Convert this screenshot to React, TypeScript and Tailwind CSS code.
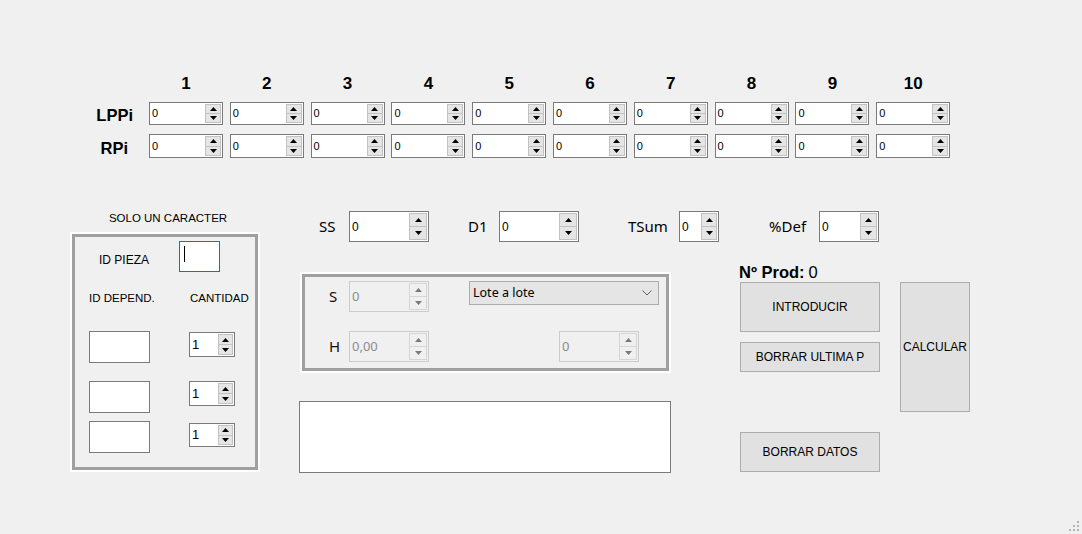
import React from "react";

function Arrow({ up, color }: { up: boolean; color: string }) {
  return (
    <svg width="7" height="4" viewBox="0 0 7 4" className="block">
      <polygon points={up ? "0,4 3.5,0 7,4" : "0,0 7,0 3.5,4"} fill={color} />
    </svg>
  );
}

function Spin({
  box,
  btn,
  value,
  disabled = false,
  text = "text-[11px]",
}: {
  box: string;
  btn: string;
  value: string;
  disabled?: boolean;
  text?: string;
}) {
  const half = disabled
    ? "flex-1 flex items-center justify-center bg-[#f0f0f0] border border-[#d6d6d6]"
    : "flex-1 flex items-center justify-center bg-[#e5e5e5] border border-[#c2c2c2]";
  return (
    <div
      className={`${box} flex border ${
        disabled ? "bg-[#f0f0f0] border-[#cccccc]" : "bg-white border-[#7a7a7a]"
      }`}
    >
      <div
        className={`flex-1 flex items-center pl-[2px] ${text} ${
          disabled ? "text-[#8c8c8c]" : "text-black"
        }`}
      >
        {value}
      </div>
      <div className={`${btn} flex flex-col my-[1px] mr-[1px]`}>
        <div className={half}>
          <Arrow up color={disabled ? "#7a7a7a" : "#000"} />
        </div>
        <div className={`${half} -mt-px`}>
          <Arrow up={false} color={disabled ? "#7a7a7a" : "#000"} />
        </div>
      </div>
    </div>
  );
}

function Btn({ cls, label }: { cls: string; label: string }) {
  return (
    <div
      className={`${cls} bg-[#e1e1e1] border border-[#adadad] flex items-center justify-center text-[12px] text-black`}
    >
      {label}
    </div>
  );
}

function GroupBox({ cls, children }: { cls: string; children: React.ReactNode }) {
  return (
    <div className={`${cls} border-2 border-white`}>
      <div className="w-full h-full border-[3px] border-[#a0a0a0]">{children}</div>
    </div>
  );
}

const cols = ["1", "2", "3", "4", "5", "6", "7", "8", "9", "10"];

export default function App() {
  return (
    <div className="relative w-[1082px] h-[534px] bg-[#f0f0f0] font-['Liberation_Sans',Arial,sans-serif] text-black overflow-hidden">
      {/* Top grid */}
      <div className="pt-[72px] flex flex-col">
        <div className="flex h-[22px] items-center">
          <div className="w-[149px] shrink-0" />
          <div className="grid grid-cols-[repeat(10,74px)] gap-x-[6.8px]">
            {cols.map((c) => (
              <div key={c} className="text-center text-[17px] font-bold leading-none">
                {c}
              </div>
            ))}
          </div>
        </div>
        <div className="flex mt-[8px] h-[23px]">
          <div className="w-[133px] shrink-0 text-right text-[16.5px] font-bold flex items-center justify-end pt-[4px]">
            LPPi
          </div>
          <div className="ml-[16px] grid grid-cols-[repeat(10,74px)] gap-x-[6.8px]">
            {cols.map((c) => (
              <Spin key={c} box="w-[74px] h-[23px]" btn="w-[16px]" value="0" />
            ))}
          </div>
        </div>
        <div className="flex mt-[9px] h-[24px]">
          <div className="w-[133px] shrink-0 text-right text-[16.5px] font-bold flex items-center justify-end pr-[5px] pt-[5px]">
            RPi
          </div>
          <div className="ml-[16px] grid grid-cols-[repeat(10,74px)] gap-x-[6.8px]">
            {cols.map((c) => (
              <Spin key={c} box="w-[74px] h-[24px]" btn="w-[16px]" value="0" />
            ))}
          </div>
        </div>
      </div>

      {/* Lower section */}
      <div className="mt-[53px] flex items-start">
        {/* Left column */}
        <div className="ml-[70px] w-[190px] flex flex-col">
          <div className="h-[16px] flex items-center justify-center pl-[6px] text-[11.5px]">
            SOLO UN CARACTER
          </div>
          <GroupBox cls="mt-[5px] w-[190px] h-[240px]">
            <div className="flex flex-col">
              <div className="mt-[4px] flex items-center">
                <div className="ml-[24px] w-[80px] text-[12px] pt-[6px]">ID PIEZA</div>
                <div className="w-[41px] h-[31px] bg-white border border-[#0078d7] flex items-start">
                  <div className="ml-[4px] mt-[4px] w-[1px] h-[16px] bg-black" />
                </div>
              </div>
              <div className="mt-[20px] h-[14px] flex items-center text-[11.5px]">
                <div className="ml-[14px] w-[101px]">ID DEPEND.</div>
                <div>CANTIDAD</div>
              </div>
              <div className="mt-[25px] flex items-start">
                <div className="ml-[14px] w-[61px] h-[32px] bg-white border border-[#7a7a7a]" />
                <div className="ml-[39px] mt-[1px]">
                  <Spin box="w-[46px] h-[25px]" btn="w-[15px]" value="1" text="text-[13px]" />
                </div>
              </div>
              <div className="mt-[18px] flex items-start">
                <div className="ml-[14px] w-[61px] h-[32px] bg-white border border-[#7a7a7a]" />
                <div className="ml-[39px]">
                  <Spin box="w-[46px] h-[25px]" btn="w-[15px]" value="1" text="text-[13px]" />
                </div>
              </div>
              <div className="mt-[8px] flex items-start">
                <div className="ml-[14px] w-[61px] h-[32px] bg-white border border-[#7a7a7a]" />
                <div className="ml-[39px] mt-[2px]">
                  <Spin box="w-[46px] h-[24px]" btn="w-[15px]" value="1" text="text-[13px]" />
                </div>
              </div>
            </div>
          </GroupBox>
        </div>

        {/* Right region */}
        <div className="ml-[39px] flex flex-col">
          <div className="h-[31px] flex items-center font-['Noto_Sans',sans-serif] text-[15px]">
            <div className="ml-[20px] w-[30px]">SS</div>
            <Spin box="w-[80px] h-[31px]" btn="w-[18px]" value="0" text="text-[12px] font-['Liberation_Sans',Arial,sans-serif]" />
            <div className="ml-[39px] w-[31px]">D1</div>
            <Spin box="w-[80px] h-[31px]" btn="w-[18px]" value="0" text="text-[12px] font-['Liberation_Sans',Arial,sans-serif]" />
            <div className="ml-[49px] w-[51px]">TSum</div>
            <Spin box="w-[40px] h-[31px]" btn="w-[16px]" value="0" text="text-[12px] font-['Liberation_Sans',Arial,sans-serif]" />
            <div className="ml-[50px] w-[50px]">%Def</div>
            <Spin box="w-[60px] h-[31px]" btn="w-[17px]" value="0" text="text-[12px] font-['Liberation_Sans',Arial,sans-serif]" />
          </div>

          <div className="mt-[20px] flex items-start">
            {/* Middle column */}
            <div className="w-[372px] pt-[10px] flex flex-col">
              <GroupBox cls="ml-[1px] w-[371px] h-[101px]">
                <div className="flex flex-col font-['Noto_Sans',sans-serif]">
                  <div className="mt-[4px] flex items-start">
                    <div className="ml-[24px] w-[20px] h-[31px] flex items-center text-[15px] text-[#1a0a0a]">S</div>
                    <Spin box="w-[80px] h-[31px]" btn="w-[18px]" value="0" disabled text="text-[13px]" />
                    <div className="ml-[40px] w-[190px] h-[24px] bg-[#e5e5e5] border border-[#acacac] flex items-center justify-between pl-[3px] pr-[6px] text-[12.5px]">
                      <span>Lote a lote</span>
                      <svg width="10" height="6" viewBox="0 0 10 6">
                        <polyline points="0.5,0.5 5,5 9.5,0.5" fill="none" stroke="#606060" strokeWidth="1" />
                      </svg>
                    </div>
                  </div>
                  <div className="mt-[19px] flex items-start">
                    <div className="ml-[24px] w-[20px] h-[31px] flex items-center text-[15px] text-[#1a0a0a]">H</div>
                    <Spin box="w-[80px] h-[31px]" btn="w-[18px]" value="0,00" disabled text="text-[13px]" />
                    <div className="ml-[130px]">
                      <Spin box="w-[80px] h-[31px]" btn="w-[18px]" value="0" disabled text="text-[13px]" />
                    </div>
                  </div>
                </div>
              </GroupBox>
              <div className="mt-[28px] w-[372px] h-[72px] bg-white border border-[#7a7a7a]" />
            </div>

            {/* Right column */}
            <div className="ml-[68px] flex flex-col">
              <div className="h-[20px] flex items-center text-[16.5px]">
                <span className="font-bold">Nº Prod:</span>
                <span className="ml-[4px]">0</span>
              </div>
              <div className="flex items-start ml-[1px]">
                <div className="flex flex-col">
                  <Btn cls="w-[140px] h-[50px]" label="INTRODUCIR" />
                  <Btn cls="mt-[10px] w-[140px] h-[30px]" label="BORRAR ULTIMA P" />
                  <Btn cls="mt-[60px] w-[140px] h-[40px]" label="BORRAR DATOS" />
                </div>
                <Btn cls="ml-[20px] w-[70px] h-[130px]" label="CALCULAR" />
              </div>
            </div>
          </div>
        </div>
      </div>

      {/* Size grip */}
      <svg className="absolute right-[2px] bottom-[2px]" width="12" height="12" viewBox="0 0 12 12">
        <rect x="9" y="1" width="2" height="2" fill="#b4b4b4" />
        <rect x="5" y="5" width="2" height="2" fill="#b4b4b4" />
        <rect x="9" y="5" width="2" height="2" fill="#b4b4b4" />
        <rect x="1" y="9" width="2" height="2" fill="#b4b4b4" />
        <rect x="5" y="9" width="2" height="2" fill="#b4b4b4" />
        <rect x="9" y="9" width="2" height="2" fill="#b4b4b4" />
      </svg>
    </div>
  );
}
